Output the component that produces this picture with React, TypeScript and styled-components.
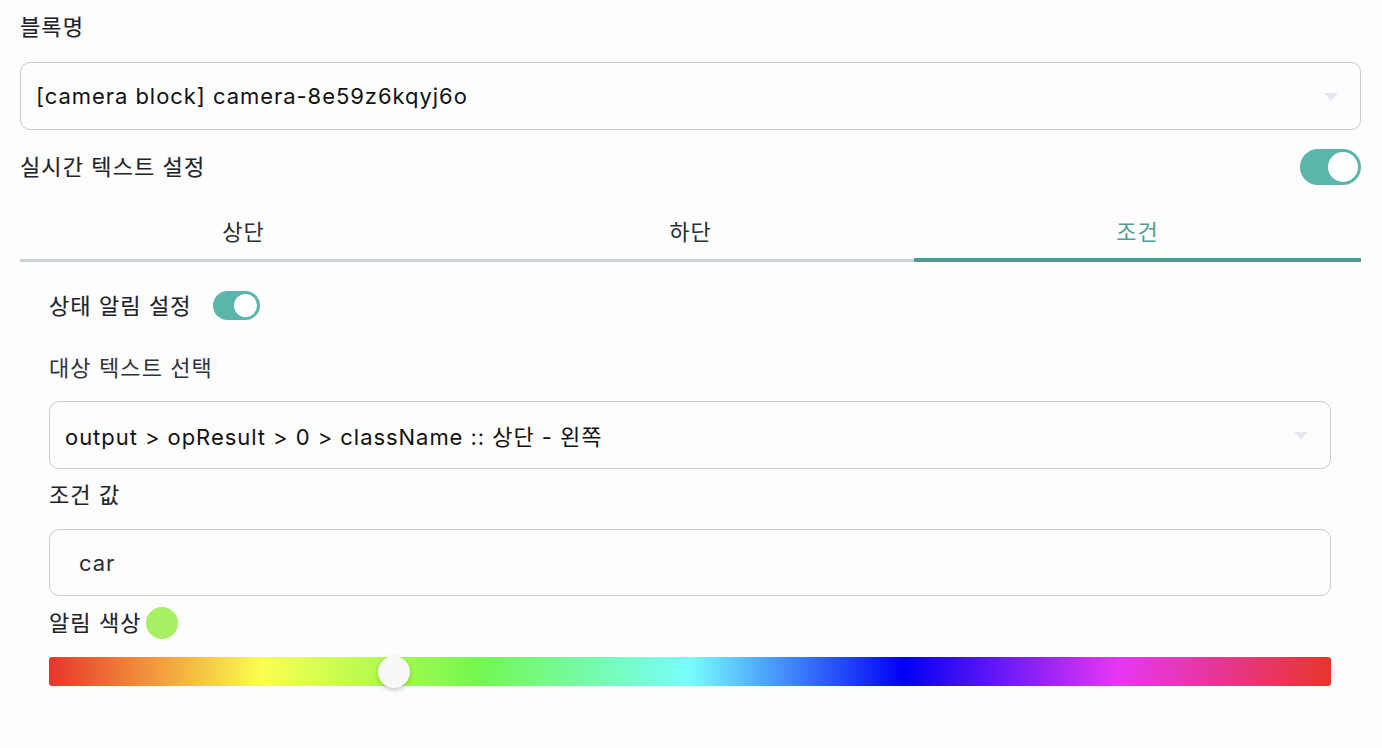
import React from "react";
import styled, { createGlobalStyle } from "styled-components";

const Global = createGlobalStyle`
  html, body { margin: 0; padding: 0; background: #fdfdfe; }
  body {
    font-family: Inter, "Noto Sans CJK KR", "Noto Sans", sans-serif;
    color: #2a2e33;
  }
  * { box-sizing: border-box; }
`;

const Page = styled.div`
  width: 1382px;
  height: 748px;
  padding: 13px 21px 0 20px;
  display: flex;
  flex-direction: column;
`;

const Label = styled.div<{ $strong?: boolean; $mt?: number }>`
  font-size: 22px;
  line-height: 28px;
  letter-spacing: 1.1px;
  font-weight: 400;
  margin-top: ${(p) => p.$mt ?? 0}px;
  color: ${(p) => (p.$strong ? "#1f2327" : "#30343a")};
  -webkit-text-stroke: ${(p) => (p.$strong ? "0.15px #1f2327" : "0")};
  white-space: nowrap;
`;

const SelectBox = styled.div<{ $mt?: number }>`
  height: 68px;
  margin-top: ${(p) => p.$mt ?? 0}px;
  border: 1px solid #cbcbcf;
  border-radius: 10px;
  background: #fdfdfe;
  display: flex;
  align-items: center;
  justify-content: space-between;
  padding: 0 22px 0 15px;
`;

const SelectText = styled.span`
  font-size: 22px;
  letter-spacing: 0.95px;
  color: #111;
  white-space: nowrap;
`;

const Caret = styled.span`
  width: 0;
  height: 0;
  border-left: 7px solid transparent;
  border-right: 7px solid transparent;
  border-top: 8px solid #e6e6f2;
  margin-top: 2px;
`;

const SpreadRow = styled.div<{ $mt?: number }>`
  display: flex;
  align-items: center;
  justify-content: space-between;
  margin-top: ${(p) => p.$mt ?? 0}px;
  height: 36px;
`;

const Switch = styled.div<{ $w: number; $h: number }>`
  width: ${(p) => p.$w}px;
  height: ${(p) => p.$h}px;
  border-radius: ${(p) => p.$h / 2}px;
  background: #5bb5aa;
  display: flex;
  align-items: center;
  justify-content: flex-end;
  padding-right: 3px;
  flex-shrink: 0;
`;

const Knob = styled.div<{ $d: number }>`
  width: ${(p) => p.$d}px;
  height: ${(p) => p.$d}px;
  border-radius: 50%;
  background: #fff;
`;

const TabBar = styled.div`
  margin-top: 15px;
  display: grid;
  grid-template-columns: repeat(3, 1fr);
  border-bottom: 3px solid #c9d1d9;
`;

const Tab = styled.div<{ $active?: boolean }>`
  height: 59px;
  display: flex;
  align-items: center;
  justify-content: center;
  padding-bottom: 0px;
  font-size: 22px;
  letter-spacing: 1.1px;
  color: ${(p) => (p.$active ? "#4d9e94" : "#2a2e33")};
  position: relative;
  &::after {
    content: "";
    display: ${(p) => (p.$active ? "block" : "none")};
    position: absolute;
    left: 0;
    right: 0;
    bottom: -3px;
    height: 4px;
    background: #4d9a90;
  }
`;

const Panel = styled.div`
  padding: 0 30px 0 29px;
  display: flex;
  flex-direction: column;
`;

const InlineRow = styled.div<{ $gap: number; $mt?: number; $h: number }>`
  display: flex;
  align-items: center;
  gap: ${(p) => p.$gap}px;
  margin-top: ${(p) => p.$mt ?? 0}px;
  height: ${(p) => p.$h}px;
`;

const InputBox = styled.div`
  margin-top: 20px;
  height: 67px;
  border: 1px solid #cbcbcf;
  border-radius: 10px;
  display: flex;
  align-items: center;
  padding-left: 29px;
  font-size: 22px;
  letter-spacing: 0.95px;
  color: #2a2e33;
`;

const Swatch = styled.div`
  width: 32px;
  height: 32px;
  border-radius: 50%;
  background: #a6f062;
`;

const HueTrack = styled.div`
  margin-top: 18px;
  height: 29px;
  border-radius: 3px;
  position: relative;
  background: linear-gradient(
    to right,
    #e8352a 0%,
    #fbff50 16.67%,
    #74f74e 33.33%,
    #78fefd 50%,
    #0000f5 66.67%,
    #e637f5 83.33%,
    #e8352a 100%
  );
`;

const Thumb = styled.div`
  position: absolute;
  top: 50%;
  width: 32px;
  height: 32px;
  margin-left: -16px;
  margin-top: -16px;
  border-radius: 50%;
  background: #f8f8f7;
  box-shadow: 0 2px 5px rgba(0, 0, 0, 0.22);
`;

export default function App() {
  const hue = 97;
  return (
    <>
      <Global />
      <Page>
        <Label $strong>블록명</Label>
        <SelectBox $mt={21}>
          <SelectText>[camera block] camera-8e59z6kqyj6o</SelectText>
          <Caret />
        </SelectBox>
        <SpreadRow $mt={19}>
          <Label $strong>실시간 텍스트 설정</Label>
          <Switch $w={61} $h={36}>
            <Knob $d={30} />
          </Switch>
        </SpreadRow>
        <TabBar>
          <Tab>상단</Tab>
          <Tab>하단</Tab>
          <Tab $active>조건</Tab>
        </TabBar>
        <Panel>
          <InlineRow $gap={21} $mt={29} $h={29}>
            <Label $strong>상태 알림 설정</Label>
            <Switch $w={47} $h={29}>
              <Knob $d={23} />
            </Switch>
          </InlineRow>
          <Label $mt={34}>대상 텍스트 선택</Label>
          <SelectBox $mt={19}>
            <SelectText>output &gt; opResult &gt; 0 &gt; className :: 상단 - 왼쪽</SelectText>
            <Caret />
          </SelectBox>
          <Label $strong $mt={12}>조건 값</Label>
          <InputBox>car</InputBox>
          <InlineRow $gap={4} $mt={11} $h={32}>
            <Label $strong>알림 색상</Label>
            <Swatch />
          </InlineRow>
          <HueTrack>
            <Thumb style={{ left: `${(hue / 360) * 100}%` }} />
          </HueTrack>
        </Panel>
      </Page>
    </>
  );
}
